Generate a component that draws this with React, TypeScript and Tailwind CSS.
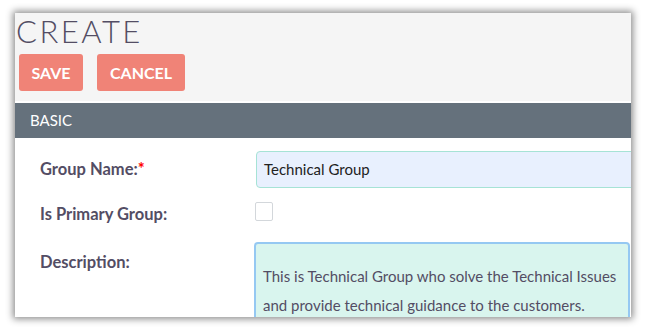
import React from 'react';

const font = { fontFamily: 'Lato, "Open Sans", sans-serif' };

const App = () => {
  return (
    <div className="w-[647px] h-[330px] bg-white pl-[15px] pt-[13px]" style={font}>
      <div className="w-[616px] h-[304px] overflow-hidden bg-white shadow-[0_0_7px_2px_rgba(0,0,0,0.45)]">
        <div className="h-[88px] bg-[#f5f5f5] pl-[1px] pt-[1px]">
          <h1 className="text-[31px] leading-[34px] font-light tracking-[2.5px] text-[#534d64]">CREATE</h1>
          <div className="flex gap-[14px] pl-[3px] pt-[6px]">
            <button className="h-[37px] w-[64px] rounded-[3px] bg-[#f08377] text-[16px] font-bold text-white">SAVE</button>
            <button className="h-[37px] w-[88px] rounded-[3px] bg-[#f08377] text-[16px] font-bold text-white">CANCEL</button>
          </div>
        </div>
        <div className="h-[2px] bg-white" />
        <div className="h-[35px] bg-[#65717c] pl-[15px] flex items-center text-[15px] text-white">BASIC</div>
        <div className="pl-[25px] pt-[13px]">
          <div className="flex items-center h-[37px]">
            <div className="w-[216px] text-[16.5px] font-bold text-[#534d64]">
              Group Name:<span className="text-[#ff0000]">*</span>
            </div>
            <div className="flex-1 h-[37px] rounded-[4px] border border-[#a6e3d6] bg-[#e8f0fe] pl-[7px] flex items-center text-[15px] text-[#222] -mr-[6px]">
              Technical Group
            </div>
          </div>
          <div className="flex items-center h-[19px] mt-[14px]">
            <div className="w-[215px] text-[16.5px] font-bold text-[#534d64] pt-[6px]">Is Primary Group:</div>
            <div className="w-[18px] h-[19px] border border-[#d3d7db] rounded-[2px] bg-white" />
          </div>
          <div className="flex mt-[21px]">
            <div className="w-[214px] text-[16.5px] font-bold text-[#534d64] pt-[8px]">Description:</div>
            <div className="w-[376px] h-[90px] rounded-[4px] border-2 border-[#95c8f2] bg-[#d9f5ee] pl-[7px] pt-[18px] text-[15px] leading-[29px] text-[#534d64]">
              <p>This is Technical Group who solve the Technical Issues</p>
              <p>and provide technical guidance to the customers.</p>
            </div>
          </div>
        </div>
      </div>
    </div>
  );
};

export default App;
